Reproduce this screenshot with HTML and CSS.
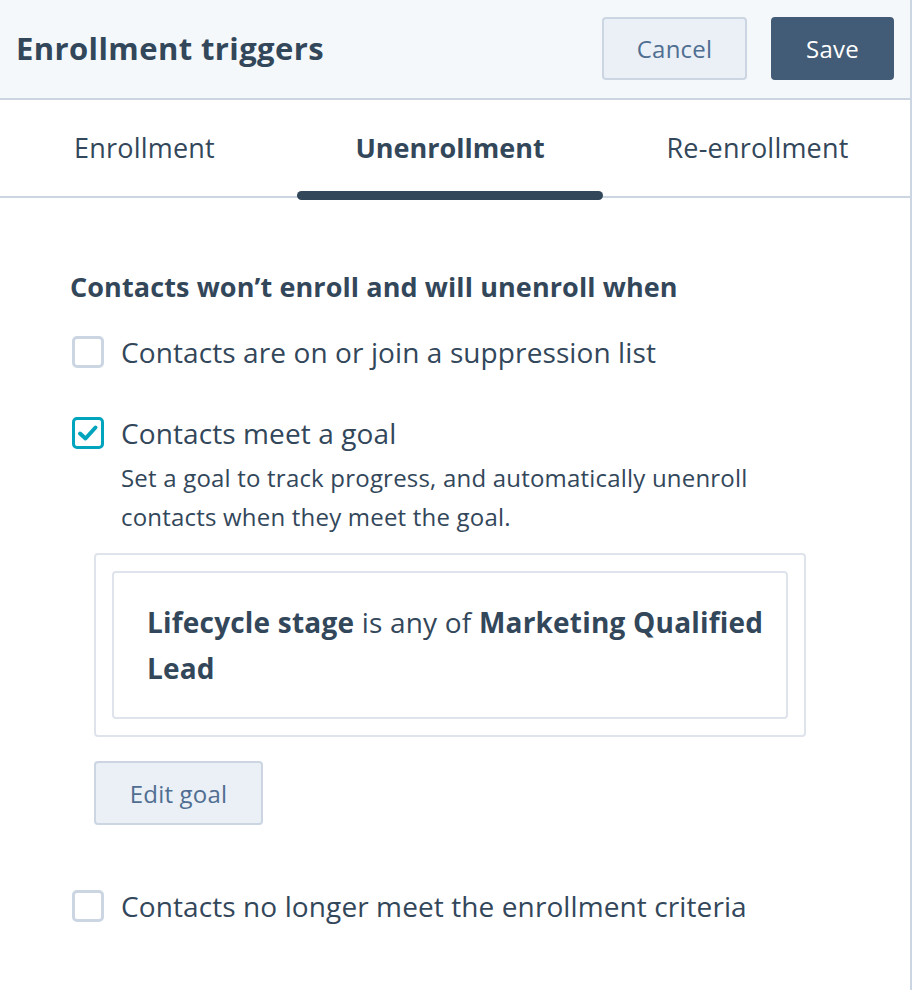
FILE: index.html
```html
<!DOCTYPE html>
<html lang="en">
<head>
<meta charset="utf-8">
<title>Enrollment triggers</title>
<link rel="stylesheet" href="styles.css">
</head>
<body>
<div class="panel">
  <header class="header">
    <h1 class="title">Enrollment triggers</h1>
    <div class="actions">
      <button class="btn btn-secondary">Cancel</button>
      <button class="btn btn-primary">Save</button>
    </div>
  </header>
  <nav class="tabs">
    <div class="tab">Enrollment</div>
    <div class="tab tab-active">Unenrollment</div>
    <div class="tab">Re-enrollment</div>
  </nav>
  <section class="content">
    <h2 class="heading">Contacts won’t enroll and will unenroll when</h2>
    <label class="option">
      <span class="checkbox"></span>
      <span class="option-label">Contacts are on or join a suppression list</span>
    </label>
    <label class="option option-goal">
      <span class="checkbox checkbox-checked">
        <svg viewBox="0 0 26 26" width="26" height="26" aria-hidden="true"><path d="M5 13.5 L10.5 18.5 L20.5 7.5" fill="none" stroke="#00a4bd" stroke-width="4" stroke-linecap="round" stroke-linejoin="round"/></svg>
      </span>
      <span class="option-label">Contacts meet a goal</span>
    </label>
    <p class="description">Set a goal to track progress, and automatically unenroll contacts when they meet the goal.</p>
    <div class="goal-outer">
      <div class="goal-inner">
        <p class="goal-text"><strong>Lifecycle stage</strong> is any of <strong>Marketing Qualified Lead</strong></p>
      </div>
    </div>
    <button class="btn btn-secondary btn-edit">Edit goal</button>
    <label class="option option-last">
      <span class="checkbox"></span>
      <span class="option-label">Contacts no longer meet the enrollment criteria</span>
    </label>
  </section>
</div>
</body>
</html>
```

FILE: styles.css
```css
* { box-sizing: border-box; }
html, body { margin: 0; padding: 0; background: #ffffff; }
body {
  font-family: "Open Sans", "Liberation Sans", sans-serif;
  color: #33475b;
  width: 912px;
  height: 990px;
  overflow: hidden;
}
.panel {
  width: 912px;
  height: 990px;
  border-right: 2px solid #cbd6e2;
}
.header {
  height: 100px;
  background: #f5f8fa;
  border-bottom: 2px solid #cbd6e2;
  display: flex;
  align-items: center;
  justify-content: space-between;
  padding: 0 16px 2px 16px;
}
.title {
  margin: 0;
  font-size: 31px;
  font-weight: 700;
  letter-spacing: 0.4px;
}
.actions { display: flex; gap: 24px; }
.btn {
  font-family: inherit;
  font-size: 24px;
  letter-spacing: 0.2px;
  height: 63px;
  border-radius: 4px;
  cursor: pointer;
  padding: 0;
}
.btn-secondary {
  background: #eaf0f6;
  border: 2px solid #cbd6e2;
  color: #506e91;
  width: 145px;
}
.btn-primary {
  background: #425b76;
  border: 2px solid #425b76;
  color: #ffffff;
  width: 123px;
}
.tabs {
  display: grid;
  grid-template-columns: 297px 306px 1fr;
  height: 98px;
  border-bottom: 2px solid #cbd6e2;
}
.tab {
  position: relative;
  display: flex;
  align-items: center;
  justify-content: center;
  font-size: 27px;
  letter-spacing: 0.2px;
  padding-bottom: 2px;
}
.tab:first-child { padding-right: 8px; }
.tab:last-child { padding-left: 2px; }
.tab-active { font-weight: 700; letter-spacing: 0; }
.tab-active::after {
  content: "";
  position: absolute;
  left: 0;
  right: 0;
  bottom: -4px;
  height: 9px;
  border-radius: 5px;
  background: #33475b;
}
.content { padding: 73px 0 0 70px; }
.heading {
  margin: 0;
  font-size: 27px;
  line-height: 32px;
  font-weight: 700;
  letter-spacing: 0.1px;
}
.option {
  display: flex;
  align-items: center;
  gap: 17px;
  margin-top: 33px;
  padding-left: 2px;
}
.option-goal { margin-top: 49px; }
.option-last { margin-top: 65px; }
.checkbox {
  width: 32px;
  height: 32px;
  flex: none;
  border: 3px solid #cbd6e2;
  border-radius: 5px;
  background: #ffffff;
  display: flex;
  align-items: center;
  justify-content: center;
}
.checkbox svg { width: 26px; height: 26px; display: block; }
.checkbox-checked { border-color: #00a4bd; }
.option-label {
  font-size: 28px;
  line-height: 32px;
  letter-spacing: 0.1px;
}
.description {
  margin: 9px 0 0 51px;
  width: 660px;
  font-size: 24px;
  line-height: 39px;
  letter-spacing: 0.2px;
}
.goal-outer {
  margin: 17px 0 0 24px;
  width: 712px;
  border: 2px solid #dfe3eb;
  border-radius: 4px;
  padding: 16px;
}
.goal-inner {
  border: 2px solid #dfe3eb;
  border-radius: 4px;
  padding: 26px 6px 26px 33px;
}
.goal-text {
  margin: 0;
  font-size: 28px;
  line-height: 46px;
  letter-spacing: 0.2px;
}
.btn-edit {
  display: block;
  margin: 24px 0 0 24px;
  width: 169px;
  height: 64px;
}
```
